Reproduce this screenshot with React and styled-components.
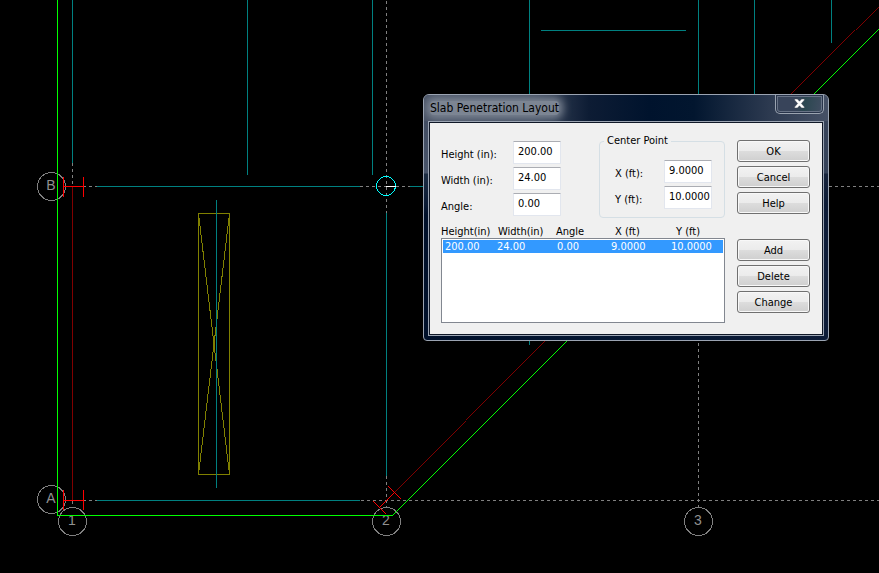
import React, { useState } from 'react';
import styled, { createGlobalStyle } from 'styled-components';

const GlobalStyle = createGlobalStyle`
  * {
    box-sizing: border-box;
  }

  body {
    margin: 0;
    background: black;
    color: black;
    font-family: "DejaVu Sans Condensed", "DejaVu Sans", sans-serif;
    font-size: 11px;
    line-height: 13px;
  }
`;

const Workspace = styled.main`
  position: relative;
  min-height: 100vh;
  overflow: hidden;
  background: black;
`;

const Drawing = styled.svg`
  position: absolute;
  top: 0;
  left: 0;
  width: 100%;
  height: 100%;
  fill: none;
  shape-rendering: crispEdges;

  .beam { stroke: #008080; }
  .grid { stroke: #808080; stroke-dasharray: 3 3; }
  .edge { stroke: #00ff00; }
  .wall { stroke: #800000; }
  .support { stroke: #ff0000; }
  .opening { stroke: #808000; }
  .bubble { stroke: #808080; }
  .cursor { stroke: #00ffff; }
`;

const GridName = styled.text`
  fill: #909090;
  font-family: "Liberation Sans", sans-serif;
  font-size: 14px;
  text-anchor: middle;
`;

// floats over the drawing like a desktop window
const Window = styled.section`
  position: absolute;
  top: 94px;
  left: 423px;
  width: 406px;
  padding: 0 4px 4px;
  border: 1px solid #9ba4b2;
  border-radius: 6px 6px 4px 4px;
  background:
    linear-gradient(#3f4a5e, #48546a 78px, #1c2c42 79px, #0a1a34 110px, transparent 120px) left / 5px 100% no-repeat,
    linear-gradient(#39455b, #354259 78px, #17243c 79px, #0c1b36 110px, transparent 120px) right / 5px 100% no-repeat,
    linear-gradient(90deg, #00102a, #061833 50%, #0d1c38);
`;

const TitleBar = styled.header`
  display: flex;
  align-items: flex-start;
  justify-content: space-between;
  height: 26px;
  margin: 0 -4px;
  padding-left: 6px;
  overflow: hidden;
  border-radius: 5px 5px 0 0;
  background: linear-gradient(90deg, #465063, #3b475b 110px, #0d1c34 165px, #00132d 225px, #02162f 270px, #2f3c52 350px, #465166);
`;

const Title = styled.h1`
  margin: 6px 0 0;
  border-radius: 4px;
  background: #7c8593;
  box-shadow: 0 0 8px 4px #7c8593;
  font-size: 12px;
  font-weight: 400;
  line-height: 14px;
`;

const CloseButton = styled.button`
  display: flex;
  align-items: center;
  justify-content: center;
  width: 49px;
  height: 19px;
  margin-right: 4px;
  padding: 0 0 2px;
  border: 1px solid #9aa3b0;
  border-top: 0;
  border-radius: 0 0 5px 5px;
  background: linear-gradient(100deg, #38445a, #38445a 45%, #2b4750 60%, #434e63);
  box-shadow: inset 0 0 0 1px #28344a, inset 0 0 0 2px #687386;
`;

const Body = styled.form`
  display: grid;
  grid-template-columns: 1fr 73px;
  column-gap: 12px;
  row-gap: 7px;
  margin: 1px;
  padding: 11px 12px 11px 11px;
  border: 1px solid #101827;
  outline: 1px solid #9ba4b2;
  background: #f0f0f0;
`;

const TopRow = styled.div`
  display: flex;
  justify-content: space-between;
`;

const Fields = styled.div`
  display: grid;
  align-content: start;
  row-gap: 3px;
  padding-top: 7px;
`;

const Group = styled.fieldset`
  display: grid;
  row-gap: 3px;
  width: 126px;
  min-width: 0;
  margin: 0;
  padding: 12px 12px 8px 4px;
  border: 1px solid #d5dfe5;
  border-radius: 4px;
`;

const Legend = styled.legend`
  padding: 0 3px;
  line-height: 14px;
`;

const FieldRow = styled.div`
  display: grid;
  grid-template-columns: ${({ $labelWidth }) => $labelWidth}px 48px;
  justify-content: end;
  align-items: center;
`;

const Label = styled.label`
  padding-top: 3px;
`;

const TextBox = styled.input`
  width: 100%;
  height: 23px;
  padding: 0 0 3px 4px;
  border: 1px solid #e2e6ee;
  border-top-color: #abadb3;
  border-radius: 1px;
  background: white;
  color: black;
  font: inherit;
`;

const ButtonColumn = styled.div`
  display: grid;
  align-content: start;
  row-gap: 4px;
  padding-top: ${({ $top }) => $top}px;
`;

const PushButton = styled.button`
  height: 22px;
  padding: 0;
  border: 1px solid #707070;
  border-radius: 3px;
  background: linear-gradient(#f2f2f2, #ebebeb 50%, #dddddd 50%, #cfcfcf);
  box-shadow: inset 0 0 0 1px #f8f8f8;
  color: black;
  font: inherit;
`;

const Table = styled.table`
  display: block;
`;

const TableHead = styled.thead`
  display: block;

  tr {
    display: grid;
    grid-template-columns: 57px 58px 59px 61px 1fr;
  }

  th {
    padding: 0;
    font-weight: 400;
    text-align: left;
    white-space: nowrap;
  }
`;

const TableBody = styled.tbody`
  display: block;
  height: 85px;
  padding: 1px;
  border: 1px solid #828790;
  background: white;
`;

const Row = styled.tr`
  display: grid;
  grid-template-columns: 52px 60px 54px 60px 1fr;
  padding-left: 2px;
  background: ${({ $selected }) => ($selected ? '#3399ff' : 'white')};
  color: ${({ $selected }) => ($selected ? 'white' : 'black')};

  td {
    padding: 0;
  }
`;

const bubbles = [
  { name: 'B', x: 51, y: 186 },
  { name: 'A', x: 51, y: 499 },
  { name: '1', x: 72, y: 521 },
  { name: '2', x: 386, y: 521 },
  { name: '3', x: 698, y: 521 },
];

const penetrations = [['200.00', '24.00', '0.00', '9.0000', '10.0000']];

function Plan() {
  return (
    <Drawing aria-label="Floor plan">
      {/* column and row grid */}
      <path className="grid" d="M72.5 163V187M83 186.5H97M360 186.5H410M829 186.5H4000" />
      <path className="grid" d="M386.5 1V213M386.5 476V508M72.5 501V508M698.5 343V508" />
      <path className="grid" d="M83 500.5H97M361 500.5H4000" />

      <path className="beam" d="M72.5 0V163M247.5 0V175M372.5 0V175M529.5 0V345M698.5 0V94M754.5 0V94M831.5 0V43" />
      <path className="beam" d="M541 30.5H686M97 186.5H360M410 186.5H424M97 500.5H360M386.5 213V476" />

      {bubbles.map((bubble) => (
        <g key={bubble.name}>
          <circle className="bubble" cx={bubble.x + 0.5} cy={bubble.y + 0.5} r="14" />
          <GridName x={bubble.x} y={bubble.y + 4}>{bubble.name}</GridName>
        </g>
      ))}

      {/* slab edge */}
      <path className="edge" d="M57.5 0V515.5H392.5L908 0" />

      <path className="wall" d="M72.5 187V500M386.5 500.5L465.5 421.5M465.5 420.5L660.5 225.5M660.5 224.5L854.5 30.5M855.5 30.5L886 0" />
      <path className="support" d="M63 186.5H84M63.5 177V197M83.5 177V197" />
      <path className="support" d="M63 500.5H84M63.5 490V510M83.5 490V510" />
      <path className="support" d="M379.5 507.5L394.5 492.5M388.5 486.5L401.5 499.5M373.5 501.5L386.5 514.5" />

      {/* slab opening */}
      <path className="opening" d="M198.5 213.5H229.5V474.5H198.5ZM198.5 213.5L229.5 474.5M229.5 213.5L198.5 474.5" />
      <path className="beam" d="M216.5 200V488" />

      <circle className="cursor" cx="386" cy="186" r="9.5" />
      <path stroke="#ffffff" d="M386 186.5H396" />
    </Drawing>
  );
}

function Field({ id, label, value, labelWidth }) {
  const [text, setText] = useState(value);

  return (
    <FieldRow $labelWidth={labelWidth}>
      <Label htmlFor={id}>{label}</Label>
      <TextBox id={id} value={text} onChange={(e) => setText(e.target.value)} />
    </FieldRow>
  );
}

function App() {
  const [selected, setSelected] = useState(0);

  return (
    <Workspace>
      <GlobalStyle />
      <Plan />
      <Window role="dialog" aria-labelledby="title">
        <TitleBar>
          <Title id="title">Slab Penetration Layout</Title>
          <CloseButton type="button" aria-label="Close">
            <svg width="13" height="11" viewBox="0 0 13 11">
              <path
                d="M1.5 1H4.5L6.5 3.2L8.5 1H11.5V2L8.4 5.5L11.5 9V10H8.5L6.5 7.8L4.5 10H1.5V9L4.6 5.5L1.5 2Z"
                fill="#ffffff"
                stroke="#39404c"
                strokeWidth="0.5"
              />
            </svg>
          </CloseButton>
        </TitleBar>
        <Body onSubmit={(e) => e.preventDefault()}>
          <TopRow>
            <Fields>
              <Field id="height" label="Height (in):" value="200.00" labelWidth={72} />
              <Field id="width" label="Width (in):" value="24.00" labelWidth={72} />
              <Field id="angle" label="Angle:" value="0.00" labelWidth={72} />
            </Fields>
            <Group>
              <Legend>Center Point</Legend>
              <Field id="center-x" label="X (ft):" value="9.0000" labelWidth={49} />
              <Field id="center-y" label="Y (ft):" value="10.0000" labelWidth={49} />
            </Group>
          </TopRow>
          <ButtonColumn $top={6}>
            <PushButton type="submit">OK</PushButton>
            <PushButton type="button">Cancel</PushButton>
            <PushButton type="button">Help</PushButton>
          </ButtonColumn>
          <Table>
            <TableHead>
              <tr>
                <th>Height(in)</th>
                <th>Width(in)</th>
                <th>Angle</th>
                <th>X (ft)</th>
                <th>Y (ft)</th>
              </tr>
            </TableHead>
            <TableBody>
              {penetrations.map((values, index) => (
                <Row key={index} $selected={index === selected} onClick={() => setSelected(index)}>
                  {values.map((value, column) => (
                    <td key={column}>{value}</td>
                  ))}
                </Row>
              ))}
            </TableBody>
          </Table>
          <ButtonColumn $top={14}>
            <PushButton type="button">Add</PushButton>
            <PushButton type="button">Delete</PushButton>
            <PushButton type="button">Change</PushButton>
          </ButtonColumn>
        </Body>
      </Window>
    </Workspace>
  );
}

export default App;
